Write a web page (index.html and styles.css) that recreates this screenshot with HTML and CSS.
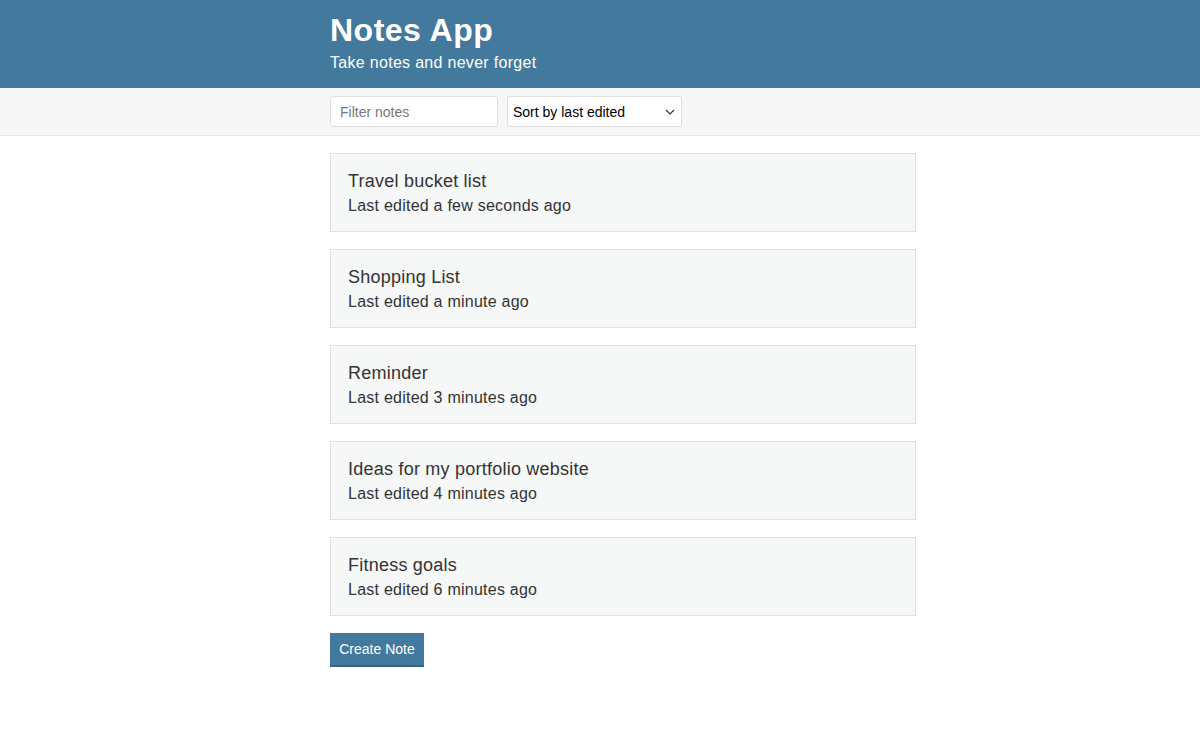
FILE: index.html
```html
<!DOCTYPE html>
<html lang="en">
<head>
<meta charset="utf-8">
<title>Notes App</title>
<link rel="stylesheet" href="styles.css">
</head>
<body>
<header class="header">
  <div class="container">
    <h1 class="header__title">Notes App</h1>
    <p class="header__subtitle">Take notes and never forget</p>
  </div>
</header>
<div class="actions">
  <div class="container actions__row">
    <input class="input" type="text" placeholder="Filter notes">
    <div class="dropdown">
      <span class="dropdown__label">Sort by last edited</span>
      <svg class="dropdown__chevron" width="10" height="6" viewBox="0 0 10 6"><path d="M1 1l4 4 4-4" fill="none" stroke="#333" stroke-width="1.2"/></svg>
    </div>
  </div>
</div>
<main class="container">
  <div class="notes">
    <a class="note">
      <p class="note__title">Travel bucket list</p>
      <p class="note__subtitle">Last edited a few seconds ago</p>
    </a>
    <a class="note">
      <p class="note__title">Shopping List</p>
      <p class="note__subtitle">Last edited a minute ago</p>
    </a>
    <a class="note">
      <p class="note__title">Reminder</p>
      <p class="note__subtitle">Last edited 3 minutes ago</p>
    </a>
    <a class="note">
      <p class="note__title">Ideas for my portfolio website</p>
      <p class="note__subtitle">Last edited 4 minutes ago</p>
    </a>
    <a class="note">
      <p class="note__title">Fitness goals</p>
      <p class="note__subtitle">Last edited 6 minutes ago</p>
    </a>
  </div>
  <button class="button">Create Note</button>
</main>
</body>
</html>
```
FILE: styles.css
```css
* { box-sizing: border-box; }
body {
  margin: 0;
  font-family: "Liberation Sans", Arial, sans-serif;
  color: #333;
  background: #fff;
}
.container {
  width: 586px;
  margin-left: 330px;
}
.header {
  background: #43799c;
  color: #fff;
  padding: 10px 0 16px;
  height: 88px;
}
.header__title {
  margin: 0;
  font-size: 32px;
  line-height: 40px;
  font-weight: 700;
  letter-spacing: 0.5px;
}
.header__subtitle {
  margin: 3px 0 0;
  font-size: 16px;
  line-height: 20px;
  font-weight: 300;
  letter-spacing: 0.3px;
}
.actions {
  background: #f7f7f7;
  border-bottom: 1px solid #e8e8e8;
  padding: 8px 0;
  height: 48px;
}
.actions__row {
  display: flex;
  gap: 9px;
}
.input {
  width: 168px;
  height: 31px;
  border: 1px solid #dedede;
  border-radius: 3px;
  padding: 0 9px;
  font-family: "Liberation Sans", Arial, sans-serif;
  font-size: 14px;
  color: #333;
  background: #fff;
}
.input::placeholder { color: #777; }
.dropdown {
  width: 175px;
  height: 31px;
  border: 1px solid #dedede;
  border-radius: 2px;
  background: #fff;
  display: flex;
  align-items: center;
  justify-content: space-between;
  padding: 0 6px 0 5px;
  font-size: 14px;
  color: #000;
}
.dropdown__chevron { margin-top: 1px; }
.notes {
  display: flex;
  flex-direction: column;
  gap: 17px;
  margin-top: 17px;
}
.note {
  display: block;
  background: #f6f7f7;
  border: 1px solid #dedfdf;
  padding: 15px 17px 13px;
  height: 79px;
}
.note__title {
  margin: 0;
  font-size: 18px;
  line-height: 24px;
  letter-spacing: 0.23px;
}
.note__subtitle {
  margin: 1px 0 0;
  font-size: 16px;
  line-height: 24px;
  letter-spacing: 0.24px;
}
.button {
  margin-top: 17px;
  height: 34px;
  width: 94px;
  padding: 0;
  background: #43799c;
  color: #fff;
  border: none;
  border-bottom: 2px solid #346482;
  font-family: "Liberation Sans", Arial, sans-serif;
  font-size: 14px;
  display: block;
}
```
